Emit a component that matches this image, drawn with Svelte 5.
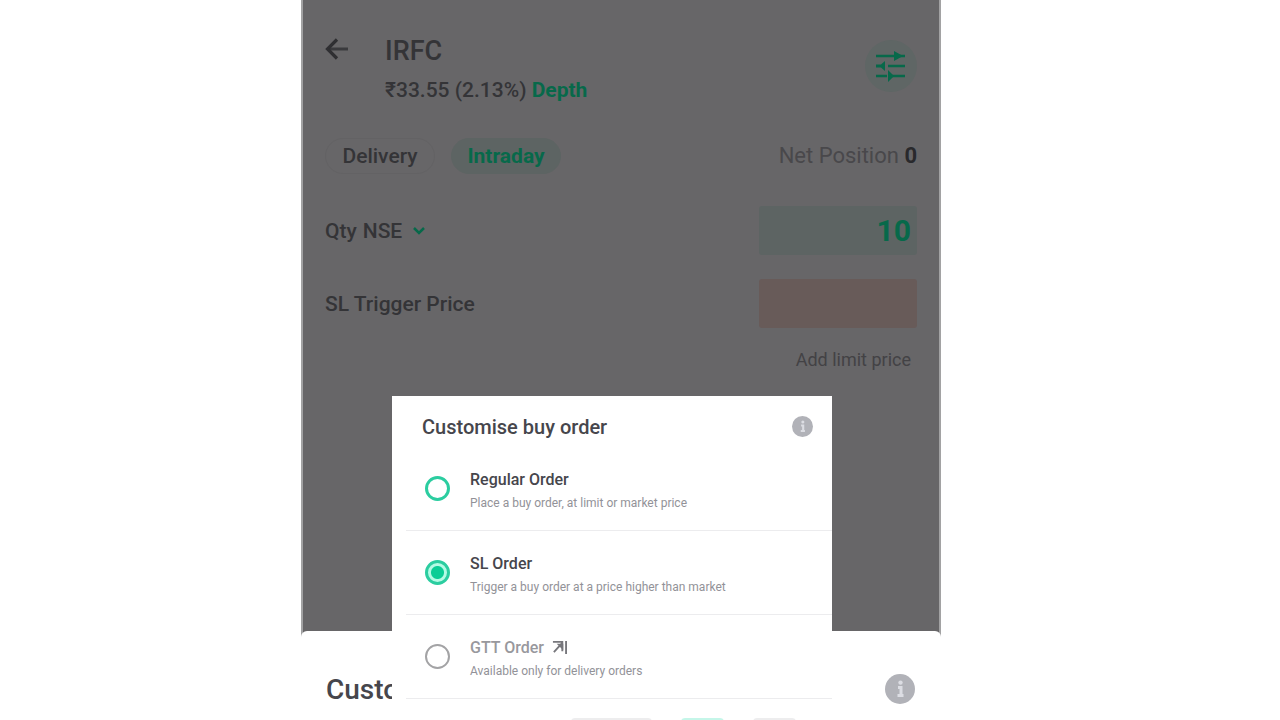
<script>
  let product = $state('intraday');
  let quantity = $state('10');
  let trigger = $state('');
  let orderType = $state('sl');

  const orders = [
    { id: 'regular', name: 'Regular Order', note: 'Place a buy order, at limit or market price' },
    { id: 'sl', name: 'SL Order', note: 'Trigger a buy order at a price higher than market' },
    { id: 'gtt', name: 'GTT Order', note: 'Available only for delivery orders', disabled: true }
  ];
</script>

{#snippet info()}
  <svg viewBox="0 0 30 30" aria-hidden="true">
    <circle cx="15" cy="15" r="15" fill="#b1b2b8" />
    <circle cx="15.500" cy="8.600" r="2.200" fill="#dcdde3" />
    <path d="M13 13.500h3v8.500M12.500 21.500h6" fill="none" stroke="#dcdde3" stroke-width="3" />
  </svg>
{/snippet}

<div class="page">
  <div class="phone">
    <main>
      <header>
        <button class="back" aria-label="Back">
          <svg viewBox="0 0 24 22" aria-hidden="true">
            <path d="M23 11H3" fill="none" stroke="#3a3a3d" stroke-width="3" />
            <path d="M12 1.500L2.500 11l9.500 9.500" fill="none" stroke="#2f2f32" stroke-width="3.200" />
          </svg>
        </button>
        <div class="stock">
          <h1>IRFC</h1>
          <p>₹33.55 (2.13%) <a href="#depth">Depth</a></p>
        </div>
        <button class="tune" aria-label="Customise">
          <svg viewBox="0 0 30 30" aria-hidden="true">
            <path d="M0 5h29M12 15h17M0 25h11M14 25h15" fill="none" stroke="#07694a" stroke-width="2.400" />
            <path d="M18 0l9 5-9 5zM9 10v10l-4-3.500H0v-3h5zM12 19l6 6-6 6z" fill="#07694a" />
          </svg>
        </button>
      </header>

      <div class="products">
        <button class="chip" class:active={product === 'delivery'} onclick={() => (product = 'delivery')}>Delivery</button>
        <button class="chip" class:active={product === 'intraday'} onclick={() => (product = 'intraday')}>Intraday</button>
        <p class="net">Net Position <b>0</b></p>
      </div>

      <div class="field">
        <div class="qty">
          <label for="qty">Qty</label>
          <select aria-label="Exchange">
            <option>NSE</option>
            <option>BSE</option>
          </select>
          <svg viewBox="0 0 12 8" aria-hidden="true">
            <path d="M1 1l5 5 5-5" fill="none" stroke="#07694a" stroke-width="2.500" />
          </svg>
        </div>
        <input id="qty" class="amount" inputmode="numeric" bind:value={quantity} />
      </div>
      <div class="field">
        <label for="trigger">SL Trigger Price</label>
        <input id="trigger" class="amount empty" inputmode="decimal" bind:value={trigger} />
      </div>
      <button class="limit">Add limit price</button>
    </main>

    <section class="sheet">
      <h2>Custo</h2>
      <button class="info" aria-label="About order types">{@render info()}</button>
    </section>

    <section class="panel" aria-labelledby="panel-title">
      <div class="panel-head">
        <h2 id="panel-title">Customise buy order</h2>
        <button class="info" aria-label="About order types">{@render info()}</button>
      </div>
      {#each orders as order (order.id)}
        <label class="order" class:disabled={order.disabled}>
          <input type="radio" name="order" value={order.id} disabled={order.disabled} bind:group={orderType} />
          <span class="text">
            <span class="name">
              {order.name}
              {#if order.disabled}
                <svg viewBox="0 0 16 16" aria-hidden="true">
                  <path d="M1 2h10v10M11 3L2 13M15 1v14" fill="none" stroke="#77777c" stroke-width="2" />
                  <path d="M5 4h7v7z" fill="#77777c" />
                </svg>
              {/if}
            </span>
            <span class="note">{order.note}</span>
          </span>
        </label>
      {/each}
      <div class="tags" aria-hidden="true"><i></i><i class="on"></i><i></i></div>
    </section>
  </div>
</div>

<style>
  :global(body) {
    margin: 0;
    background: #fff;
  }

  .page {
    display: grid;
    grid-template-columns: 301fr 640fr 339fr;
    height: 100vh;
    overflow: hidden;
    font-family: Roboto, 'Noto Sans', sans-serif;
    color: #343437;
  }

  .page * {
    box-sizing: border-box;
  }

  h1,
  h2,
  p {
    margin: 0;
  }

  button,
  input,
  select {
    font: inherit;
    color: inherit;
    border: 0;
    padding: 0;
    background: none;
  }

  svg {
    display: block;
  }

  .phone {
    grid-column: 2;
    position: relative;
    display: flex;
    flex-direction: column;
    background: #676668;
    border-left: 2px solid #a2a2a3;
    border-right: 2px solid #a2a2a3;
  }

  main {
    flex: none;
    height: 631px;
    padding: 34px 22px 0;
    font-size: 21px;
    line-height: 28px;
  }

  header {
    display: flex;
    align-items: flex-start;
  }

  .back {
    width: 24px;
    margin: 4px 36px 0 0;
  }

  .stock {
    flex: 1;
  }

  h1 {
    font-size: 27px;
    line-height: 34px;
    font-weight: 500;
  }

  .stock p {
    margin-top: 8px;
    font-weight: 500;
  }

  a {
    color: #07694a;
    font-weight: 700;
    text-decoration: none;
  }

  .tune {
    display: grid;
    place-items: center;
    width: 52px;
    height: 52px;
    margin: 6px 0 0;
    border-radius: 50%;
    background: #5f6665;
  }

  .tune svg {
    width: 30px;
    overflow: visible;
  }

  .products {
    display: flex;
    align-items: center;
    gap: 16px;
    margin-top: 34px;
  }

  .chip {
    height: 36px;
    width: 110px;
    border-radius: 18px;
    border: 1px solid #636264;
    font-weight: 500;
  }

  .chip.active {
    background: #5d6463;
    border-color: #5d6463;
    color: #07694a;
    font-weight: 700;
  }

  .net {
    margin-left: auto;
    color: #49484b;
    font-size: 22px;
  }

  .net b {
    color: #29292c;
  }

  .field {
    display: flex;
    align-items: center;
    justify-content: space-between;
    margin-top: 24px;
    font-weight: 500;
  }

  .products + .field {
    margin-top: 32px;
  }

  .qty {
    display: flex;
    align-items: center;
    gap: 6px;
  }

  select {
    appearance: none;
    width: 44px;
    height: 28px;
  }

  .qty svg {
    width: 12px;
  }

  .amount {
    width: 158px;
    height: 49px;
    padding: 0 6px;
    background: #5d6463;
    color: #07694a;
    font-size: 30px;
    font-weight: 700;
    text-align: right;
    border-radius: 3px;
  }

  .amount.empty {
    background: #685b59;
  }

  .limit {
    display: block;
    margin: 18px 6px 0 auto;
    color: #434245;
    font-size: 18px;
    line-height: 28px;
  }

  .sheet {
    flex: 1 0 auto;
    display: flex;
    align-items: flex-start;
    justify-content: space-between;
    margin: 0 -2px;
    padding: 42px 26px 20px 25px;
    background: #fff;
    border-radius: 6px 6px 0 0;
    color: #46464c;
  }

  .sheet h2 {
    font-size: 28px;
    line-height: 34px;
    font-weight: 500;
  }

  .sheet .info {
    width: 30px;
    margin-top: 1px;
  }

  .panel {
    position: absolute;
    top: 396px;
    bottom: 0;
    left: 14%;
    right: 16.8%;
    overflow: hidden;
    padding-left: 14px;
    background: #fff;
    color: #46464c;
  }

  .panel-head {
    display: flex;
    align-items: flex-start;
    justify-content: space-between;
    padding: 18px 19px 7px 16px;
  }

  .panel-head h2 {
    font-size: 20px;
    line-height: 26px;
    font-weight: 500;
  }

  .panel-head .info {
    width: 21px;
    margin-top: 2px;
  }

  .order {
    display: flex;
    align-items: center;
    gap: 20px;
    height: 84px;
    padding-left: 19px;
    border-bottom: 1px solid #ececee;
  }

  .order input {
    appearance: none;
    flex: none;
    width: 25px;
    height: 25px;
    margin: 0;
    border: 3px solid #2bcda0;
    border-radius: 50%;
  }

  .order input:checked {
    background: radial-gradient(circle, #0bcd96 6px, #b5fbe5 7px);
  }

  .order input:disabled {
    border: 2px solid #a3a3a5;
  }

  .text {
    display: grid;
    gap: 2px;
    padding-top: 4px;
  }

  .name {
    display: flex;
    align-items: center;
    gap: 8px;
    font-size: 16px;
    line-height: 22px;
    font-weight: 500;
  }

  .name svg {
    width: 15px;
  }

  .note {
    font-size: 12px;
    line-height: 20px;
    color: #929298;
  }

  .disabled .name {
    color: #98989d;
  }

  .tags {
    display: flex;
    gap: 29px;
    padding: 19px 36px 0 165px;
  }

  .tags i {
    flex: 43;
    height: 24px;
    border-radius: 4px;
    background: #ededee;
  }

  .tags i:first-child {
    flex: 81;
  }

  .tags .on {
    background: #c5f6e9;
  }
</style>
